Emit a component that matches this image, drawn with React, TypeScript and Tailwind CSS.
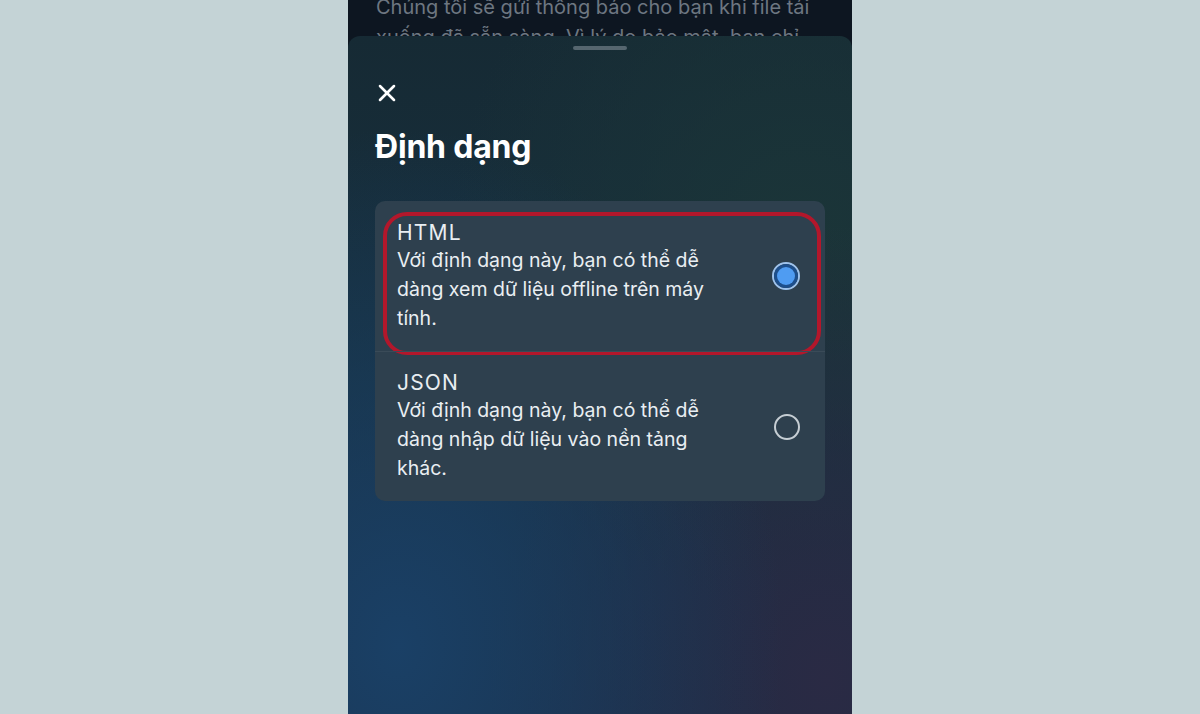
import { X } from 'lucide-react'

const options = [
  {
    title: 'HTML',
    description:
      'Với định dạng này, bạn có thể dễ dàng xem dữ liệu offline trên máy tính.',
    selected: true,
  },
  {
    title: 'JSON',
    description:
      'Với định dạng này, bạn có thể dễ dàng nhập dữ liệu vào nền tảng khác.',
    selected: false,
  },
]

function Radio({ selected }: { selected: boolean }) {
  if (selected) {
    return (
      <div className="flex h-[28px] w-[28px] items-center justify-center rounded-full border-[2px] border-[#9fc3ec]">
        <div className="flex h-[24px] w-[24px] items-center justify-center rounded-full bg-[#1d4f8c]">
          <div className="h-[18px] w-[18px] rounded-full bg-[#4f9cf2]" />
        </div>
      </div>
    )
  }
  return (
    <div className="h-[26px] w-[26px] rounded-full border-[2px] border-[#c6ced4]" />
  )
}

export default function App() {
  return (
    <div
      className="flex h-[714px] w-full justify-center overflow-hidden bg-[#c4d3d6]"
      style={{ fontFamily: 'Inter, "Noto Sans", sans-serif' }}
    >
      <div className="flex h-full w-[504px] flex-col bg-[#0d1621]">
        {/* content behind the sheet */}
        <div className="h-[36px] overflow-hidden px-[28px]">
          <p className="-mt-[8px] text-[20px] leading-[30px] text-[#6d7781]">
            Chúng tôi sẽ gửi thông báo cho bạn khi file tải xuống đã sẵn sàng.
            Vì lý do bảo mật, bạn chỉ
          </p>
        </div>

        {/* Sheet */}
        <div className="flex flex-1 flex-col rounded-t-[12px] bg-[radial-gradient(ellipse_at_10%_90%,#1a4066_0%,transparent_60%),radial-gradient(ellipse_at_95%_95%,#2a2a44_0%,transparent_50%),radial-gradient(ellipse_at_90%_30%,#1b3538_0%,transparent_55%),linear-gradient(180deg,#162a34_0%,#17303f_50%,#1a2d44_100%)] px-[27px]">
          <div className="mx-auto mt-[10px] h-[4px] w-[54px] rounded-full bg-[#56666f]" />

          <X className="ml-[-2px] mt-[29px] h-[28px] w-[28px] text-white" strokeWidth={2.2} />

          <h1 className="mt-[20px] text-[32px] font-bold leading-[40px] tracking-[-0.2px] text-white">
            Định dạng
          </h1>

          <div className="mt-[34px] flex flex-col rounded-[10px] bg-[#2e404e]">
            {options.map((o, i) => (
              <div
                key={o.title}
                className={`relative flex h-[150px] items-center justify-between pl-[22px] pr-[25px] ${
                  i > 0 ? 'border-t border-[#3a4b58]' : ''
                }`}
              >
                {o.selected && (
                  <div className="absolute bottom-[-4px] left-[8px] right-[4px] top-[11px] rounded-[24px] border-[4px] border-[#b3172b]" />
                )}
                <div className="w-[340px] text-[#e9eef2]">
                  <div className="text-[21px] leading-[26px] tracking-[1.2px]">
                    {o.title}
                  </div>
                  <p className="text-[19.5px] leading-[29px]">{o.description}</p>
                </div>
                <Radio selected={o.selected} />
              </div>
            ))}
          </div>
        </div>
      </div>
    </div>
  )
}
